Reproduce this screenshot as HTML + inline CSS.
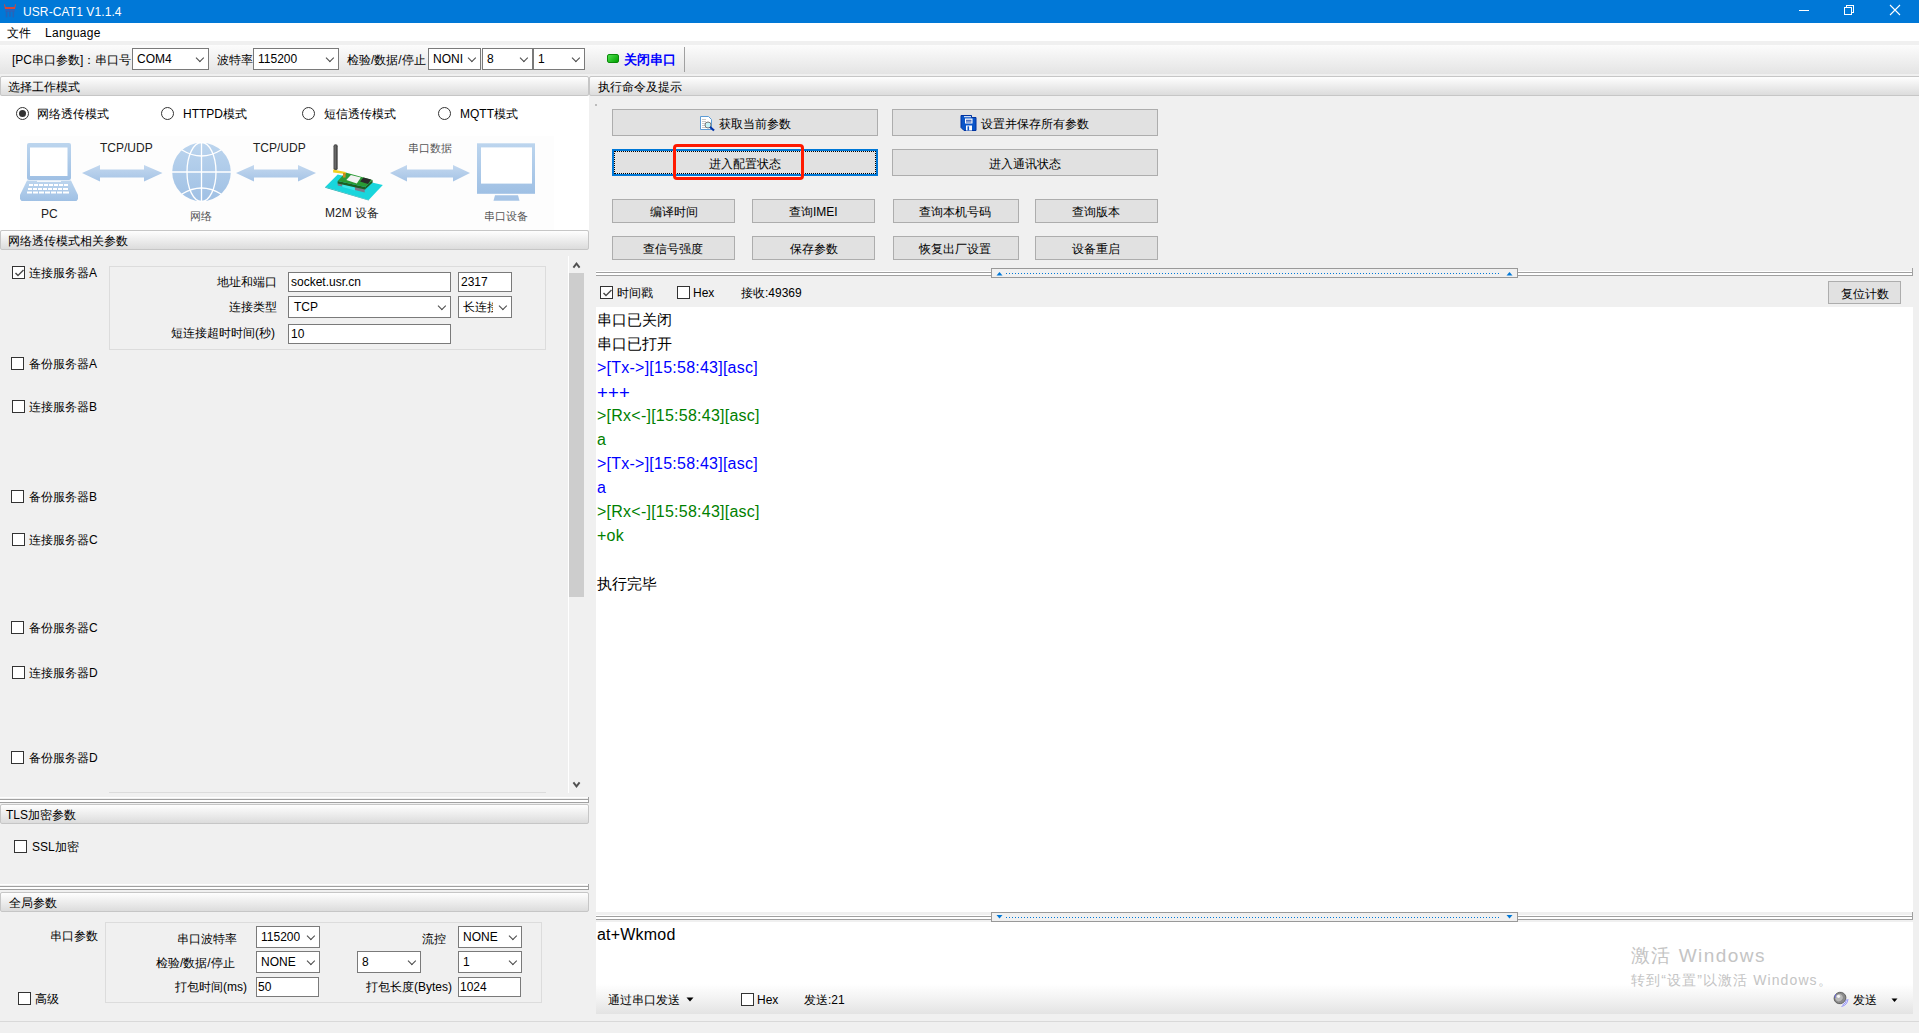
<!DOCTYPE html>
<html><head><meta charset="utf-8">
<style>
*{box-sizing:border-box}
html,body{margin:0;padding:0;width:1919px;height:1033px;overflow:hidden;background:#f0f0f0;font-family:"Liberation Sans",sans-serif;font-size:12px;color:#000}
.a{position:absolute}
.t{position:absolute;white-space:nowrap;line-height:14px}
.combo{position:absolute;background:#fff;border:1px solid #7a7a7a}
.combo i{position:absolute;right:5px;top:5.6px;width:5.8px;height:5.8px;border-right:1px solid #4a4a4a;border-bottom:1px solid #4a4a4a;transform:rotate(45deg)}
.inp{position:absolute;background:#fff;border:1px solid #7a7a7a}
.btn{position:absolute;background:#e1e1e1;border:1px solid #adadad;text-align:center;white-space:nowrap}
.hdr{position:absolute;background:linear-gradient(#fefefe,#dcdcdc);border:1px solid #c6c6c6;border-radius:2px}
.cb{position:absolute;width:13px;height:13px;border:1px solid #333;background:#fff}
.rb{position:absolute;width:13px;height:13px;border:1px solid #333;border-radius:50%;background:#fff}
.split{position:absolute;height:6px;border-top:1px solid #fff;}
</style></head><body>
<!-- title bar -->
<div class="a" style="left:0;top:0;width:1919px;height:23px;background:#0078d7"></div>
<div class="t" style="left:23px;top:5px;color:#fff;font-size:12px;line-height:14px;letter-spacing:0.1px">USR-CAT1 V1.1.4</div>
<!-- menu -->
<div class="a" style="left:0;top:23px;width:1919px;height:18px;background:#fff"></div>
<div class="t" style="left:7px;top:26px">文件</div>
<div class="t" style="left:45px;top:26px;letter-spacing:0.3px">Language</div>
<!-- toolbar -->
<div class="a" style="left:0;top:45px;width:1919px;height:29px;background:linear-gradient(#fcfcfc,#e4e4e4)"></div>

<!-- title icon -->
<svg class="a" style="left:0;top:0" width="20" height="20" viewBox="0 0 20 20">
<path d="M4 4.2 Q4.3 4 5 4.5 L5.6 7 L14.4 7 L15 4.5 Q15.7 4 16 4.2 L15 9 L5 9 Z" fill="#d5483a"/>
<path d="M5 9 L15 9 L14.5 12 L5.5 12 Z" fill="#2f62b8" opacity="0.8"/>
<rect x="5.8" y="11" width="1.6" height="6.5" rx="0.8" fill="#2f5fb0" opacity="0.8"/>
<rect x="9.1" y="11" width="1.6" height="6" rx="0.8" fill="#2f5fb0" opacity="0.8"/>
<rect x="12.5" y="11" width="1.6" height="6.5" rx="0.8" fill="#2f5fb0" opacity="0.8"/>
</svg>
<!-- window controls -->
<div class="a" style="left:1799px;top:10px;width:10px;height:1px;background:#fff"></div>
<div class="a" style="left:1846px;top:5px;width:8px;height:8px;border:1px solid #fff"></div>
<div class="a" style="left:1844px;top:7px;width:8px;height:8px;border:1px solid #fff;background:#0078d7"></div>
<svg class="a" style="left:1889px;top:4px" width="12" height="12" viewBox="0 0 12 12"><path d="M1 1 L11 11 M11 1 L1 11" stroke="#fff" stroke-width="1.1"/></svg>

<!-- toolbar content -->
<div class="t" style="left:12px;top:53px">[PC串口参数]：串口号</div>
<div class="combo" style="left:132px;top:48px;width:77px;height:22px"><span class="t" style="left:4px;top:3px">COM4</span><i></i></div>
<div class="t" style="left:217px;top:53px">波特率</div>
<div class="combo" style="left:253px;top:48px;width:86px;height:22px"><span class="t" style="left:4px;top:3px">115200</span><i></i></div>
<div class="t" style="left:347px;top:53px">检验/数据/停止</div>
<div class="combo" style="left:428px;top:48px;width:53px;height:22px"><span class="t" style="left:4px;top:3px">NONI</span><i></i></div>
<div class="combo" style="left:482px;top:48px;width:51px;height:22px"><span class="t" style="left:4px;top:3px">8</span><i></i></div>
<div class="combo" style="left:533px;top:48px;width:52px;height:22px"><span class="t" style="left:4px;top:3px">1</span><i></i></div>
<div class="a" style="left:607px;top:54px;width:12px;height:9px;background:linear-gradient(135deg,#4fe04f,#00a000);border:1px solid #0a8a0a;border-radius:2px"></div>
<div class="t" style="left:624px;top:53px;color:#0000ff;font-weight:bold;font-size:13px">关闭串口</div>
<div class="a" style="left:684px;top:47px;width:1px;height:25px;background:#a0a0a0"></div>

<!-- LEFT PANEL -->
<div class="a" style="left:0;top:96px;width:589px;height:134px;background:#fff"></div>
<div class="hdr" style="left:0;top:76px;width:589px;height:20px"></div>
<div class="t" style="left:8px;top:80px">选择工作模式</div>
<div class="hdr" style="left:589px;top:76px;width:1340px;height:20px"></div>
<div class="t" style="left:598px;top:80px">执行命令及提示</div>

<div class="rb" style="left:16px;top:107px"><div class="a" style="left:2px;top:2px;width:7px;height:7px;border-radius:50%;background:#333"></div></div>
<div class="t" style="left:37px;top:107px">网络透传模式</div>
<div class="rb" style="left:161px;top:107px"></div>
<div class="t" style="left:183px;top:107px">HTTPD模式</div>
<div class="rb" style="left:302px;top:107px"></div>
<div class="t" style="left:324px;top:107px">短信透传模式</div>
<div class="rb" style="left:438px;top:107px"></div>
<div class="t" style="left:460px;top:107px">MQTT模式</div>

<!-- diagram -->
<svg class="a" style="left:0;top:130px" width="589" height="100" viewBox="0 130 589 100">
<defs>
<linearGradient id="ib" x1="0" y1="0" x2="0" y2="1"><stop offset="0" stop-color="#bcd5ee"/><stop offset="1" stop-color="#9fc0e4"/></linearGradient>
<linearGradient id="ar" x1="0" y1="0" x2="0" y2="1"><stop offset="0" stop-color="#c3d8ef"/><stop offset="1" stop-color="#a6c4e6"/></linearGradient>
</defs>
<rect x="20" y="136" width="534" height="94" fill="#fdfdfd"/>
<!-- laptop -->
<rect x="27" y="143" width="44" height="37" rx="2" fill="url(#ib)"/>
<rect x="30" y="147.5" width="37.5" height="28.5" fill="#fff"/>
<path d="M27 180.5 L71 180.5 L78 195 L78 199 L76.5 201 L21.5 201 L20 199 L20 195 Z" fill="url(#ib)"/>
<g fill="#fff">
<rect x="37" y="180.8" width="24" height="1"/>
<rect x="29" y="184" width="4" height="2"/><rect x="34" y="184" width="4" height="2"/><rect x="39" y="184" width="4" height="2"/><rect x="44" y="184" width="4" height="2"/><rect x="49" y="184" width="4" height="2"/><rect x="54" y="184" width="4" height="2"/><rect x="59" y="184" width="4" height="2"/><rect x="64" y="184" width="4" height="2"/>
<rect x="28" y="188" width="4" height="2"/><rect x="33" y="188" width="4" height="2"/><rect x="38" y="188" width="4" height="2"/><rect x="43" y="188" width="4" height="2"/><rect x="48" y="188" width="4" height="2"/><rect x="53" y="188" width="4" height="2"/><rect x="58" y="188" width="4" height="2"/><rect x="63" y="188" width="5" height="2"/>
<rect x="27" y="191.5" width="5" height="2"/><rect x="33" y="191.5" width="5" height="2"/><rect x="39" y="191.5" width="5" height="2"/><rect x="45" y="191.5" width="5" height="2"/><rect x="51" y="191.5" width="5" height="2"/><rect x="57" y="191.5" width="5" height="2"/><rect x="63" y="191.5" width="6" height="2"/>
</g>
<!-- arrows -->
<path d="M82 173 L100 165 L100 169.5 L144 169.5 L144 165 L162.5 173 L144 181.5 L144 177.5 L100 177.5 L100 181.5 Z" fill="url(#ar)"/>
<path d="M236 173 L254 165 L254 169.5 L298 169.5 L298 165 L316 173 L298 181.5 L298 177.5 L254 177.5 L254 181.5 Z" fill="url(#ar)"/>
<path d="M390 173 L407 165 L407 169.5 L453 169.5 L453 165 L470 173 L453 181.5 L453 177.5 L407 177.5 L407 181.5 Z" fill="url(#ar)"/>
<!-- globe -->
<circle cx="201.5" cy="172" r="29.3" fill="url(#ib)"/>
<g fill="none" stroke="#fff" stroke-width="1.3">
<line x1="201.5" y1="142" x2="201.5" y2="202"/>
<line x1="172" y1="172" x2="231" y2="172"/>
<ellipse cx="201.5" cy="172" rx="14.5" ry="29.5"/>
<path d="M182 150 Q201.5 162 221 150"/>
<path d="M182 194 Q201.5 182 221 194"/>
</g>
<!-- M2M device -->
<path d="M325.2 187 L337.7 174.5 L382.8 185.1 L368.7 199.9 Z" fill="#19d6dc"/>
<path d="M325.2 187 L368.7 199.9 L368.7 200.6 L325.2 187.7 Z" fill="#12a8ad"/>
<path d="M337.7 182 L342.4 182.5 L342.4 186.5 L337.7 185.5 Z" fill="#7a7a8a"/>
<path d="M354.9 186.5 L364.7 189 L364.7 192.6 L354.9 190 Z" fill="#7a7a8a"/>
<path d="M342.4 184 L354.9 187.5 L354.9 190.5 L342.4 187 Z" fill="#3fe6ea"/>
<path d="M337.7 181.1 L365.1 187 L365.1 189.5 L337.7 183.6 Z" fill="#1d5e22"/>
<path d="M365.1 187 L372.6 180.1 L372.6 182.6 L365.1 189.5 Z" fill="#1d5e22"/>
<path d="M337.7 181.1 L345.6 172.6 L372.6 180.1 L365.1 187 Z" fill="#2a9a35"/>
<path d="M346.3 180.1 L350.9 174.9 L360.8 177.5 L356.8 183.4 Z" fill="#f2f2f2"/>
<path d="M360.1 181.5 L363.4 177.5 L371 179.5 L368 184.1 Z" fill="#2a2a2a"/>
<rect x="333.5" y="144.3" width="4.2" height="26" rx="2" fill="#4a4a4a"/>
<rect x="334.6" y="145.5" width="1.2" height="23" fill="#8a8a8a" opacity="0.6"/>
<path d="M333.1 169.6 L345.6 172 L345.6 174 L333.1 172.5 Z" fill="#f0d020"/>
<rect x="343" y="173" width="2.6" height="4.5" fill="#d08a20"/>
<!-- monitor -->
<rect x="477" y="143.3" width="58" height="50.5" fill="url(#ib)"/>
<rect x="481" y="147.4" width="51" height="36.2" fill="#fff"/>
<path d="M495 195.3 L518 195.3 L519.5 200.7 L493.5 200.7 Z" fill="#a6c4e6"/>
</svg>
<div class="t" style="left:100px;top:141px;font-size:12px;color:#222">TCP/UDP</div>
<div class="t" style="left:253px;top:141px;font-size:12px;color:#222">TCP/UDP</div>
<div class="t" style="left:408px;top:141px;font-size:11px;color:#555">串口数据</div>
<div class="t" style="left:41px;top:207px;font-size:12px;color:#222">PC</div>
<div class="t" style="left:190px;top:209px;font-size:11px;color:#555">网络</div>
<div class="t" style="left:325px;top:206px;font-size:12px;color:#222">M2M 设备</div>
<div class="t" style="left:484px;top:209px;font-size:11px;color:#555">串口设备</div>

<div class="hdr" style="left:0;top:230px;width:589px;height:20px"></div>
<div class="t" style="left:8px;top:234px">网络透传模式相关参数</div>

<!-- scroll area -->
<div class="cb" style="left:12px;top:266px"><svg class="a" style="left:1px;top:1px" width="11" height="11" viewBox="0 0 11 11"><path d="M1.5 5 L4 7.6 L9.5 2" fill="none" stroke="#4a4a4a" stroke-width="1.4"/></svg></div>
<div class="t" style="left:29px;top:266px">连接服务器A</div>
<div class="a" style="left:109px;top:266px;width:437px;height:84px;border:1px solid #dcdcdc"></div>
<div class="t" style="left:217px;top:275px">地址和端口</div>
<div class="inp" style="left:288px;top:272px;width:163px;height:20px"><span class="t" style="left:2px;top:2px">socket.usr.cn</span></div>
<div class="inp" style="left:458px;top:272px;width:54px;height:20px"><span class="t" style="left:2px;top:2px">2317</span></div>
<div class="t" style="left:229px;top:300px">连接类型</div>
<div class="combo" style="left:288px;top:296px;width:163px;height:22px"><span class="t" style="left:5px;top:3px">TCP</span><i></i></div>
<div class="combo" style="left:458px;top:296px;width:54px;height:22px"><span class="t" style="left:4px;top:3px;width:30px;overflow:hidden">长连接</span><i></i></div>
<div class="t" style="left:171px;top:326px">短连接超时时间(秒)</div>
<div class="inp" style="left:288px;top:324px;width:163px;height:20px"><span class="t" style="left:2px;top:2px">10</span></div>

<div class="cb" style="left:11px;top:357px"></div><div class="t" style="left:29px;top:357px">备份服务器A</div>
<div class="cb" style="left:12px;top:400px"></div><div class="t" style="left:29px;top:400px">连接服务器B</div>
<div class="cb" style="left:11px;top:490px"></div><div class="t" style="left:29px;top:490px">备份服务器B</div>
<div class="cb" style="left:12px;top:533px"></div><div class="t" style="left:29px;top:533px">连接服务器C</div>
<div class="cb" style="left:11px;top:621px"></div><div class="t" style="left:29px;top:621px">备份服务器C</div>
<div class="cb" style="left:12px;top:666px"></div><div class="t" style="left:29px;top:666px">连接服务器D</div>
<div class="cb" style="left:11px;top:751px"></div><div class="t" style="left:29px;top:751px">备份服务器D</div>
<div class="a" style="left:109px;top:792px;width:437px;height:1px;background:#dcdcdc"></div>

<!-- scrollbar -->
<div class="a" style="left:568px;top:256px;width:1px;height:537px;background:#fff"></div>
<svg class="a" style="left:570px;top:260px" width="12" height="10" viewBox="0 0 12 10"><path d="M3.4 7.6 L6.5 3.6 L9.6 7.6" fill="none" stroke="#505050" stroke-width="1.9"/></svg>
<div class="a" style="left:569px;top:273px;width:15px;height:324px;background:#cdcdcd"></div>
<svg class="a" style="left:570px;top:779px" width="12" height="10" viewBox="0 0 12 10"><path d="M3.4 3.4 L6.5 7.4 L9.6 3.4" fill="none" stroke="#505050" stroke-width="1.9"/></svg>

<!-- splitter 1 -->
<div class="a" style="left:0;top:797px;width:589px;height:7px;border-top:1px solid #fff"></div>
<div class="a" style="left:0;top:799px;width:589px;height:1px;background:#a0a0a0"></div>
<div class="a" style="left:0;top:800px;width:589px;height:2px;background:#fff"></div>
<div class="a" style="left:0;top:802px;width:589px;height:1px;background:#a0a0a0"></div>
<div class="a" style="left:588px;top:797px;width:1px;height:6px;background:#a0a0a0"></div>
<div class="hdr" style="left:0;top:804px;width:589px;height:20px"></div>
<div class="t" style="left:6px;top:808px">TLS加密参数</div>
<div class="cb" style="left:14px;top:840px"></div><div class="t" style="left:32px;top:840px">SSL加密</div>

<!-- splitter 2 -->
<div class="a" style="left:0;top:884px;width:589px;height:1px;background:#fff"></div>
<div class="a" style="left:0;top:886px;width:589px;height:1px;background:#a0a0a0"></div>
<div class="a" style="left:0;top:887px;width:589px;height:2px;background:#fff"></div>
<div class="a" style="left:0;top:889px;width:589px;height:1px;background:#a0a0a0"></div>
<div class="a" style="left:588px;top:884px;width:1px;height:6px;background:#a0a0a0"></div>
<div class="hdr" style="left:0;top:892px;width:589px;height:20px"></div>
<div class="t" style="left:9px;top:896px">全局参数</div>

<div class="t" style="left:50px;top:929px">串口参数</div>
<div class="a" style="left:105px;top:922px;width:437px;height:81px;border:1px solid #dcdcdc"></div>
<div class="cb" style="left:18px;top:992px"></div><div class="t" style="left:35px;top:992px">高级</div>
<div class="t" style="left:177px;top:932px">串口波特率</div>
<div class="combo" style="left:256px;top:926px;width:64px;height:22px"><span class="t" style="left:4px;top:3px;width:39px;overflow:hidden">115200</span><i></i></div>
<div class="t" style="left:422px;top:932px">流控</div>
<div class="combo" style="left:458px;top:926px;width:64px;height:22px"><span class="t" style="left:4px;top:3px">NONE</span><i></i></div>
<div class="t" style="left:156px;top:956px">检验/数据/停止</div>
<div class="combo" style="left:256px;top:951px;width:64px;height:22px"><span class="t" style="left:4px;top:3px">NONE</span><i></i></div>
<div class="combo" style="left:357px;top:951px;width:64px;height:22px"><span class="t" style="left:4px;top:3px">8</span><i></i></div>
<div class="combo" style="left:458px;top:951px;width:64px;height:22px"><span class="t" style="left:4px;top:3px">1</span><i></i></div>
<div class="t" style="left:175px;top:980px">打包时间(ms)</div>
<div class="inp" style="left:256px;top:977px;width:63px;height:20px"><span class="t" style="left:1px;top:2px">50</span></div>
<div class="t" style="left:366px;top:980px">打包长度(Bytes)</div>
<div class="inp" style="left:458px;top:977px;width:63px;height:20px"><span class="t" style="left:1px;top:2px">1024</span></div>
<div class="a" style="left:0;top:1021px;width:1919px;height:1px;background:#d9d9d9"></div>

<!-- RIGHT PANEL buttons -->
<div class="btn" style="left:612px;top:109px;width:266px;height:27px"></div>
<svg class="a" style="left:699px;top:115px" width="18" height="17" viewBox="0 0 18 17">
<path d="M1.5 1.5 L9.5 1.5 L12.5 4.5 L12.5 14.5 L1.5 14.5 Z" fill="#fff" stroke="#5b9bd5" stroke-width="1"/>
<path d="M3 4.5 H7 M3 6.5 H7 M3 8.5 H6 M3 10.5 H6 M3 12.5 H7" stroke="#bbb" stroke-width="0.8"/>
<circle cx="9" cy="10" r="3" fill="#c8f4f8" stroke="#777" stroke-width="1"/>
<path d="M11 12 L15 15.5" stroke="#0033aa" stroke-width="2.2"/>
</svg>
<div class="t" style="left:719px;top:117px">获取当前参数</div>
<div class="btn" style="left:892px;top:109px;width:266px;height:27px"></div>
<svg class="a" style="left:960px;top:114px" width="18" height="18" viewBox="0 0 18 18">
<path d="M1 1.5 L11.5 1.5 L11.5 3.5 L16 3.5 L16 16.5 L4 16.5 L1 13.5 Z" fill="#0a55c8"/>
<path d="M1 1.5 L11.5 1.5 L11.5 3.5 L16 3.5 L16 16.5 L4 16.5 L1 13.5 Z" fill="none" stroke="#0033a0" stroke-width="1"/>
<rect x="4" y="2.2" width="7" height="1" fill="#fff"/>
<rect x="5" y="4.5" width="7.5" height="5" fill="#fff"/>
<rect x="6" y="5.8" width="5.5" height="0.9" fill="#0033a0"/><rect x="6" y="7.5" width="5.5" height="0.9" fill="#0033a0"/>
<rect x="6" y="11.5" width="6" height="5" fill="#fff"/><rect x="7.5" y="12.3" width="1.6" height="4.2" fill="#0a55c8"/>
</svg>
<div class="t" style="left:981px;top:117px">设置并保存所有参数</div>

<div class="a" style="left:612px;top:149px;width:266px;height:27px;background:#e1e1e1;border:2px solid #0078d7"><div class="a" style="left:0;top:0;right:0;bottom:0;border:1px dotted #000"></div></div>
<div class="t" style="left:709px;top:157px">进入配置状态</div>
<div class="a" style="left:673px;top:144px;width:131px;height:36px;border:3px solid #ff1a00;border-radius:4px"></div>
<div class="btn" style="left:892px;top:149px;width:266px;height:27px"></div>
<div class="t" style="left:989px;top:157px">进入通讯状态</div>

<div class="btn" style="left:612px;top:199px;width:123px;height:24px"></div><div class="t" style="left:650px;top:205px">编译时间</div>
<div class="btn" style="left:752px;top:199px;width:123px;height:24px"></div><div class="t" style="left:789px;top:205px">查询IMEI</div>
<div class="btn" style="left:893px;top:199px;width:126px;height:24px"></div><div class="t" style="left:919px;top:205px">查询本机号码</div>
<div class="btn" style="left:1035px;top:199px;width:123px;height:24px"></div><div class="t" style="left:1072px;top:205px">查询版本</div>
<div class="btn" style="left:612px;top:236px;width:123px;height:24px"></div><div class="t" style="left:643px;top:242px">查信号强度</div>
<div class="btn" style="left:752px;top:236px;width:123px;height:24px"></div><div class="t" style="left:790px;top:242px">保存参数</div>
<div class="btn" style="left:893px;top:236px;width:126px;height:24px"></div><div class="t" style="left:919px;top:242px">恢复出厂设置</div>
<div class="btn" style="left:1035px;top:236px;width:123px;height:24px"></div><div class="t" style="left:1072px;top:242px">设备重启</div>

<!-- right splitter top -->
<div class="a" style="left:596px;top:271px;width:1317px;height:1px;background:#fff"></div>
<div class="a" style="left:596px;top:272px;width:1317px;height:1px;background:#a0a0a0"></div>
<div class="a" style="left:596px;top:273px;width:1317px;height:2px;background:#fff"></div>
<div class="a" style="left:596px;top:275px;width:1317px;height:1px;background:#a0a0a0"></div>
<div class="a" style="left:1912px;top:268px;width:1px;height:8px;background:#a0a0a0"></div>
<div class="a" style="left:991px;top:268px;width:527px;height:10px;background:#f0f0f0;border:1px solid #999"></div>
<div class="a" style="left:1006px;top:273px;width:494px;height:1px;background-image:linear-gradient(90deg,#0078d7 1px,transparent 1px);background-size:3px 1px"></div>
<svg class="a" style="left:996px;top:270.5px" width="7" height="5"><path d="M0.5 4.5 L3.5 1 L6.5 4.5 Z" fill="#0078d7"/></svg>
<svg class="a" style="left:1506px;top:270.5px" width="7" height="5"><path d="M0.5 4.5 L3.5 1 L6.5 4.5 Z" fill="#0078d7"/></svg>

<div class="cb" style="left:600px;top:286px"><svg class="a" style="left:1px;top:1px" width="11" height="11" viewBox="0 0 11 11"><path d="M1.5 5 L4 7.6 L9.5 2" fill="none" stroke="#4a4a4a" stroke-width="1.4"/></svg></div>
<div class="t" style="left:617px;top:286px">时间戳</div>
<div class="cb" style="left:677px;top:286px"></div><div class="t" style="left:693px;top:286px">Hex</div>
<div class="t" style="left:741px;top:286px">接收:49369</div>
<div class="btn" style="left:1828px;top:281px;width:73px;height:23px"></div><div class="t" style="left:1841px;top:287px">复位计数</div>

<!-- log -->
<div class="a" style="left:596px;top:307px;width:1317px;height:605px;background:#fff"></div>
<div class="a" style="left:597px;top:308px;font-size:15px;line-height:24px;white-space:nowrap">
<div>串口已关闭</div>
<div>串口已打开</div>
<div style="color:#0000ff;letter-spacing:0.24px;font-size:16px">&gt;[Tx-&gt;][15:58:43][asc]</div>
<div style="color:#0000ff;letter-spacing:0.2px;font-size:18.5px;position:relative;top:1px">+++</div>
<div style="color:#008000;letter-spacing:0.24px;font-size:16px">&gt;[Rx&lt;-][15:58:43][asc]</div>
<div style="color:#008000;letter-spacing:0.24px;font-size:16px">a</div>
<div style="color:#0000ff;letter-spacing:0.24px;font-size:16px">&gt;[Tx-&gt;][15:58:43][asc]</div>
<div style="color:#0000ff;letter-spacing:0.24px;font-size:16px">a</div>
<div style="color:#008000;letter-spacing:0.24px;font-size:16px">&gt;[Rx&lt;-][15:58:43][asc]</div>
<div style="color:#008000;letter-spacing:0.24px;font-size:16px">+ok</div>
<div>&nbsp;</div>
<div>执行完毕</div>
</div>

<!-- bottom splitter -->
<div class="a" style="left:596px;top:915px;width:1317px;height:1px;background:#fff"></div>
<div class="a" style="left:596px;top:916px;width:1317px;height:1px;background:#a0a0a0"></div>
<div class="a" style="left:596px;top:917px;width:1317px;height:2px;background:#fff"></div>
<div class="a" style="left:596px;top:919px;width:1317px;height:1px;background:#a0a0a0"></div>
<div class="a" style="left:1912px;top:912px;width:1px;height:8px;background:#a0a0a0"></div>
<div class="a" style="left:991px;top:912px;width:527px;height:10px;background:#f0f0f0;border:1px solid #999"></div>
<div class="a" style="left:1006px;top:917px;width:494px;height:1px;background-image:linear-gradient(90deg,#0078d7 1px,transparent 1px);background-size:3px 1px"></div>
<svg class="a" style="left:996px;top:914px" width="7" height="5"><path d="M0.5 1 L3.5 4.5 L6.5 1 Z" fill="#0078d7"/></svg>
<svg class="a" style="left:1506px;top:914px" width="7" height="5"><path d="M0.5 1 L3.5 4.5 L6.5 1 Z" fill="#0078d7"/></svg>

<!-- send area -->
<div class="a" style="left:596px;top:922px;width:1317px;height:92px;background:linear-gradient(#fff 0,#fff 62px,#f4f4f4 75px,#e3e3e3 92px)"></div>
<div class="t" style="left:597px;top:926px;font-size:16px;line-height:18px;letter-spacing:0.2px">at+Wkmod</div>
<div class="t" style="left:608px;top:993px">通过串口发送</div>
<svg class="a" style="left:686px;top:997px" width="8" height="5"><path d="M0.5 0.5 L7.5 0.5 L4 4.5 Z" fill="#000"/></svg>
<div class="cb" style="left:741px;top:993px"></div><div class="t" style="left:757px;top:993px">Hex</div>
<div class="t" style="left:804px;top:993px">发送:21</div>
<div class="t" style="left:1631px;top:945px;font-size:19px;line-height:22px;color:#c4c4c4;letter-spacing:1.45px">激活 Windows</div>
<div class="t" style="left:1631px;top:972px;font-size:14px;line-height:16px;color:#c4c4c4;letter-spacing:1.1px">转到“设置”以激活 Windows。</div>
<svg class="a" style="left:1832px;top:990px" width="18" height="18" viewBox="0 0 18 18">
<ellipse cx="8" cy="8" rx="6" ry="5.6" transform="rotate(-30 8 8)" fill="#8a8a8a" stroke="#555" stroke-width="0.8"/>
<ellipse cx="7.3" cy="7.3" rx="3.8" ry="3.4" transform="rotate(-30 8 8)" fill="#b8b8b8"/>
<circle cx="6.5" cy="6.3" r="1.6" fill="#f4f4f4"/>
<path d="M4 4 Q2.5 6 3.5 8" fill="none" stroke="#6a6aff" stroke-width="0.7"/>
<path d="M10.5 15 Q14 13.5 14.5 9.5 M9.5 16.5 Q15.5 15 16 9" fill="none" stroke="#7a7aff" stroke-width="0.8"/>
</svg>
<div class="t" style="left:1853px;top:993px">发送</div>
<svg class="a" style="left:1891px;top:998px" width="7" height="5"><path d="M0.5 0.5 L6.5 0.5 L3.5 4 Z" fill="#000"/></svg>
<div class="a" style="left:595px;top:104px;width:2px;height:2px;background:#999;opacity:.6"></div>
<!--END-->
</body></html>
